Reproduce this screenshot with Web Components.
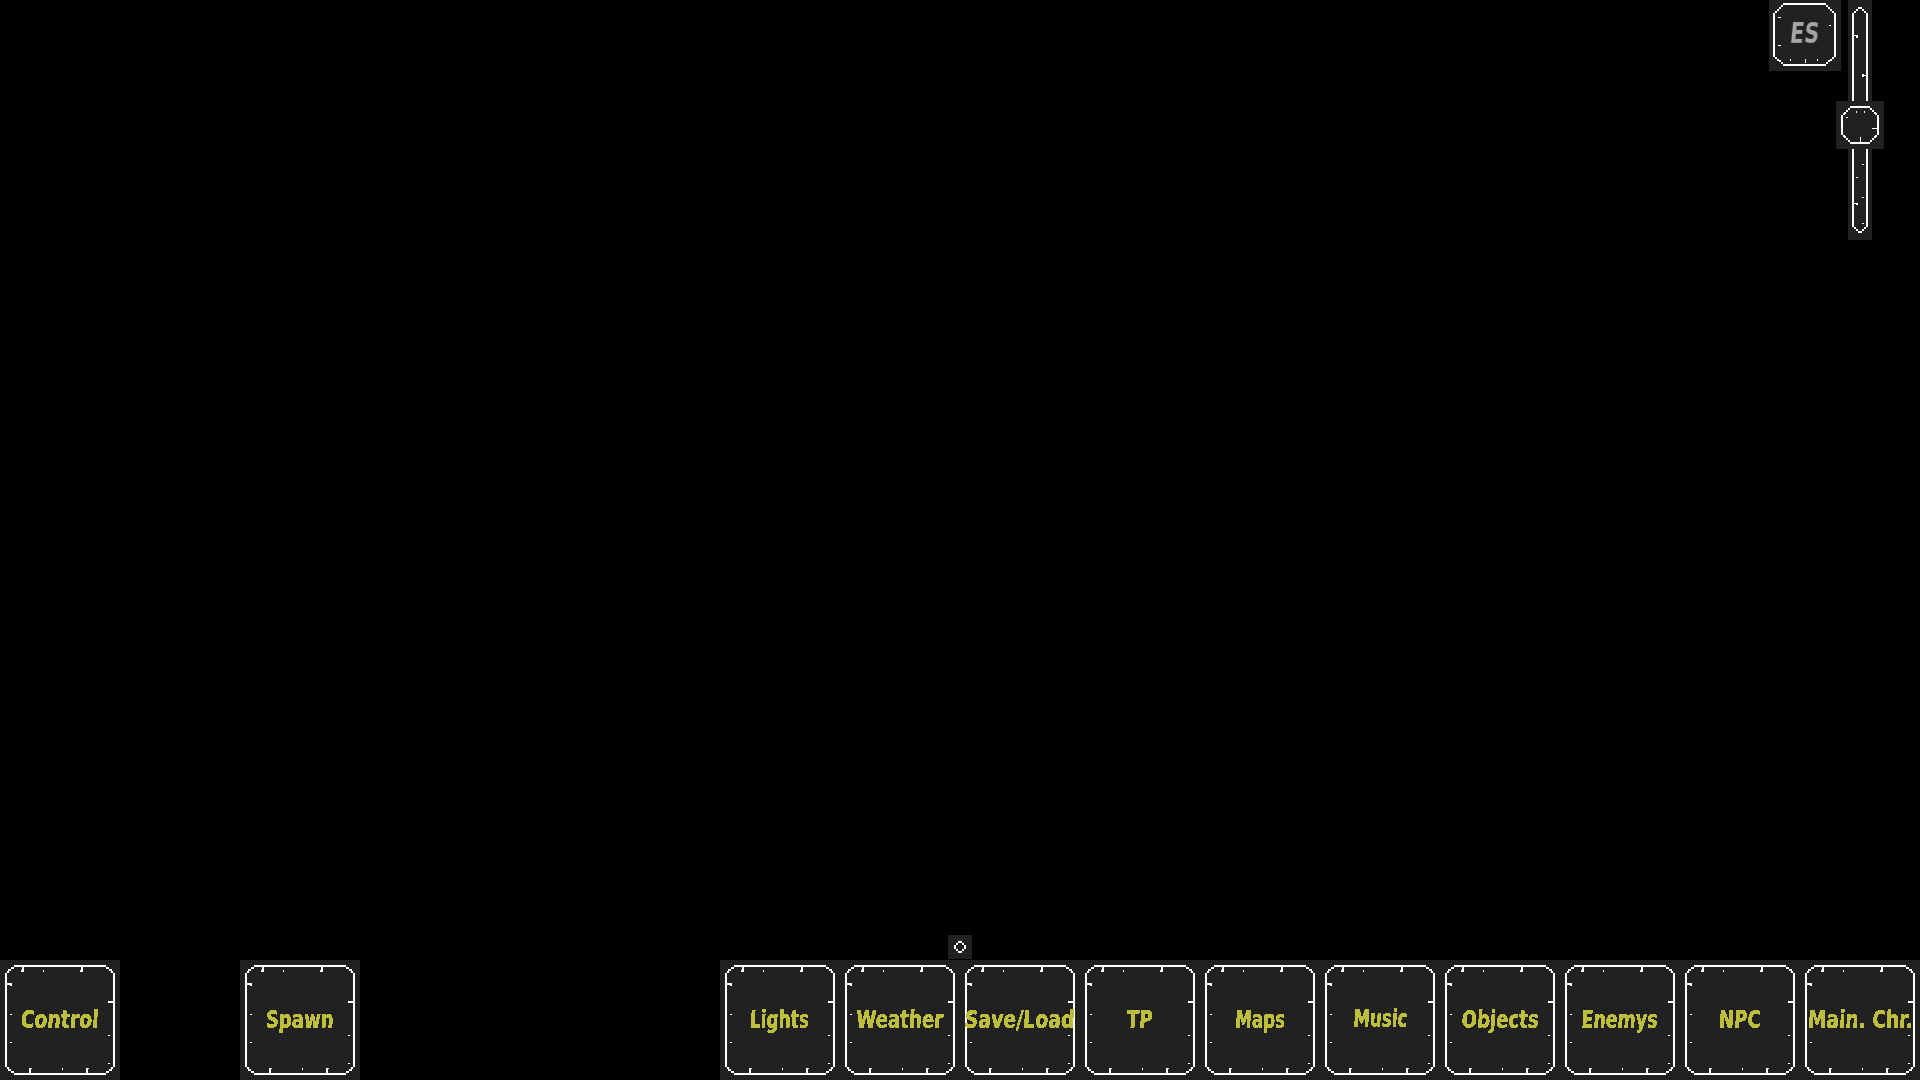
<!DOCTYPE html>
<html>
<head>
<meta charset="utf-8">
<title>HUD</title>
<style>
  html, body { margin: 0; height: 100%; background: #000; overflow: hidden; }
</style>
</head>
<body>
<game-hud>
  <lang-button slot="top">ES</lang-button>
  <volume-slider slot="top"></volume-slider>
  <hud-dot slot="middle"></hud-dot>
  <hud-button slot="bar" col="1" w="78">Control</hud-button>
  <hud-button slot="bar" col="3" w="68">Spawn</hud-button>
  <hud-button slot="bar" col="7" w="59">Lights</hud-button>
  <hud-button slot="bar" col="8" w="87">Weather</hud-button>
  <hud-button slot="bar" col="9" w="110">Save/Load</hud-button>
  <hud-button slot="bar" col="10" w="26">TP</hud-button>
  <hud-button slot="bar" col="11" w="50">Maps</hud-button>
  <hud-button slot="bar" col="12" w="54" up="1">Music</hud-button>
  <hud-button slot="bar" col="13" w="77">Objects</hud-button>
  <hud-button slot="bar" col="14" w="76">Enemys</hud-button>
  <hud-button slot="bar" col="15" w="42">NPC</hud-button>
  <hud-button slot="bar" col="16" w="105">Main. Chr.</hud-button>
</game-hud>

<script>
// rects as [x, y, w, h] -> path data. keeps the pixel art crisp
const rects = list => list.map(([x, y, w = 1, h = 1]) => `M${x} ${y}h${w}v${h}h${-w}z`).join('');

// one corner, mirrored to the other three
const corners = (list, size) => list.flatMap(([x, y, w, h]) => [
  [x, y, w, h],
  [size - x - w, y, w, h],
  [x, size - y - h, w, h],
  [size - x - w, size - y - h, w, h]
]);

// frame of the big buttons
const buttonFrame = rects([
  [14, 5, 92, 2], [14, 113, 92, 2], [5, 13, 2, 94], [113, 13, 2, 94],
  ...corners([[11, 7, 3, 2], [8, 9, 3, 2], [7, 11, 2, 2]], 120),
  // ticks
  [22, 7, 2, 5], [21, 10, 1, 2], [43, 10, 1, 2], [81, 7, 2, 5], [80, 10, 1, 2],
  [7, 23, 5, 2], [10, 25, 2, 1], [10, 54, 2, 1], [10, 82, 2, 1],
  [108, 41, 5, 2], [108, 75, 2, 1], [108, 103, 2, 1],
  [29, 108, 2, 5], [31, 108, 1, 1], [62, 108, 1, 2], [86, 108, 2, 5], [88, 108, 1, 1]
]);

const langFrame = rects([
  [14, 3, 43, 2], [14, 64, 43, 2], [4, 13, 2, 44], [65, 13, 2, 44],
  [12, 5, 2, 2], [10, 7, 2, 2], [8, 9, 2, 2], [6, 11, 2, 2],
  [57, 5, 2, 2], [59, 7, 2, 2], [61, 9, 2, 2], [63, 11, 2, 2],
  [6, 57, 2, 2], [8, 59, 2, 2], [10, 60, 2, 2], [12, 62, 2, 2],
  [63, 57, 2, 2], [61, 59, 2, 2], [59, 60, 2, 2], [57, 62, 2, 2],
  [9, 17, 3, 1], [9, 45, 3, 1], [60, 25, 2, 1],
  [21, 59, 1, 2], [36, 59, 1, 4], [48, 59, 1, 2]
]);

const trackFrame = rects([
  [10, 7, 4, 2], [8, 9, 2, 2], [14, 9, 2, 2], [6, 11, 2, 2], [16, 11, 2, 2],
  [4, 13, 2, 214], [18, 13, 2, 214],
  [6, 227, 2, 2], [16, 227, 2, 2], [8, 229, 2, 2], [14, 229, 2, 2], [10, 231, 4, 2],
  [6, 35, 4, 1], [8, 36, 2, 2], [14, 75, 4, 1], [14, 74, 2, 3],
  [14, 164, 2, 1], [8, 177, 2, 1], [14, 197, 2, 1], [6, 203, 4, 1], [8, 204, 2, 1], [14, 223, 2, 1]
]);

const knobFrame = rects([
  [14, 5, 20, 2], [14, 41, 20, 2], [5, 14, 2, 20], [41, 14, 2, 20],
  ...corners([[12, 7, 2, 2], [10, 9, 2, 2], [7, 12, 2, 2], [8, 11, 2, 2]], 48),
  [20, 10, 1, 2], [28, 10, 1, 2], [10, 16, 2, 1], [36, 27, 5, 1], [24, 36, 1, 5]
]);

const dotRing = rects([
  [10, 6, 4, 2], [10, 16, 4, 2], [6, 10, 2, 4], [16, 10, 2, 4],
  [8, 8, 2, 2], [14, 8, 2, 2], [8, 14, 2, 2], [14, 14, 2, 2]
]);

const svg = (w, h, d) => `<svg width="${w}" height="${h}" viewBox="0 0 ${w} ${h}" shape-rendering="crispEdges"><path fill="#fff" d="${d}"/></svg>`;

class GameHud extends HTMLElement {
  constructor() {
    super();
    this.attachShadow({ mode: 'open' }).innerHTML = `
      <style>
        :host { display: flex; flex-direction: column; height: 100vh; }
        .top { display: flex; justify-content: flex-end; gap: 7px; padding-right: 48px; }
        .middle { display: flex; justify-content: center; margin-top: auto; padding-bottom: 1px; }
        .bar { display: grid; grid-template-columns: repeat(16, 120px); height: 120px; }
      </style>
      <div class="top"><slot name="top"></slot></div>
      <div class="middle"><slot name="middle"></slot></div>
      <div class="bar"><slot name="bar"></slot></div>
    `;
  }
}

class HudButton extends HTMLElement {
  constructor() {
    super();
    this.attachShadow({ mode: 'open' }).innerHTML = `
      <style>
        :host {
          display: flex; align-items: center; justify-content: center; position: relative;
          height: 120px; background: #212121; color: #bebe3e;
          font: bold 25px "DejaVu Sans", sans-serif;
        }
        svg { position: absolute; left: 0; top: 0; }
        .label { display: inline-block; white-space: nowrap; filter: url(#hard); }
      </style>
      ${svg(120, 120, buttonFrame)}
      <svg width="0" height="0"><filter id="hard"><feComponentTransfer><feFuncA type="discrete" tableValues="0 1 1"/></feComponentTransfer></filter></svg>
      <span class="label"><slot></slot></span>
    `;
  }

  connectedCallback() {
    this.style.gridColumn = this.getAttribute('col');
    const label = this.shadowRoot.querySelector('.label');
    const up = 1 + Number(this.getAttribute('up') || 0);
    const width = label.getBoundingClientRect().width;
    const sx = width ? Number(this.getAttribute('w')) / width : 1;
    label.style.transform = `translateY(${-up}px) scaleX(${sx}) skewX(-4deg)`;
  }
}

class LangButton extends HTMLElement {
  constructor() {
    super();
    this.attachShadow({ mode: 'open' }).innerHTML = `
      <style>
        :host {
          display: flex; align-items: center; justify-content: center; position: relative;
          width: 72px; height: 71px; background: #212121; color: #a6a6a6;
          font: bold 28px "DejaVu Sans", sans-serif;
        }
        svg { position: absolute; left: 0; top: 0; }
        span { position: relative; top: -2px; display: inline-block; transform: scaleX(.74) skewX(-8deg); filter: blur(.4px); }
      </style>
      ${svg(72, 71, langFrame)}
      <span><slot></slot></span>
    `;
  }
}

class VolumeSlider extends HTMLElement {
  constructor() {
    super();
    this.attachShadow({ mode: 'open' }).innerHTML = `
      <style>
        :host { display: block; position: relative; width: 24px; height: 240px; background: #212121; }
        svg { display: block; }
        .knob { position: absolute; left: -12px; top: 101px; width: 48px; height: 48px; background: #212121; }
      </style>
      ${svg(24, 240, trackFrame)}
      <div class="knob">${svg(48, 48, knobFrame)}</div>
    `;
  }
}

class HudDot extends HTMLElement {
  constructor() {
    super();
    this.attachShadow({ mode: 'open' }).innerHTML = `
      <style>
        :host { display: block; width: 24px; height: 24px; background: #212121; }
        svg { display: block; }
      </style>
      ${svg(24, 24, dotRing)}
    `;
  }
}

customElements.define('game-hud', GameHud);
customElements.define('hud-button', HudButton);
customElements.define('lang-button', LangButton);
customElements.define('volume-slider', VolumeSlider);
customElements.define('hud-dot', HudDot);
</script>
</body>
</html>
